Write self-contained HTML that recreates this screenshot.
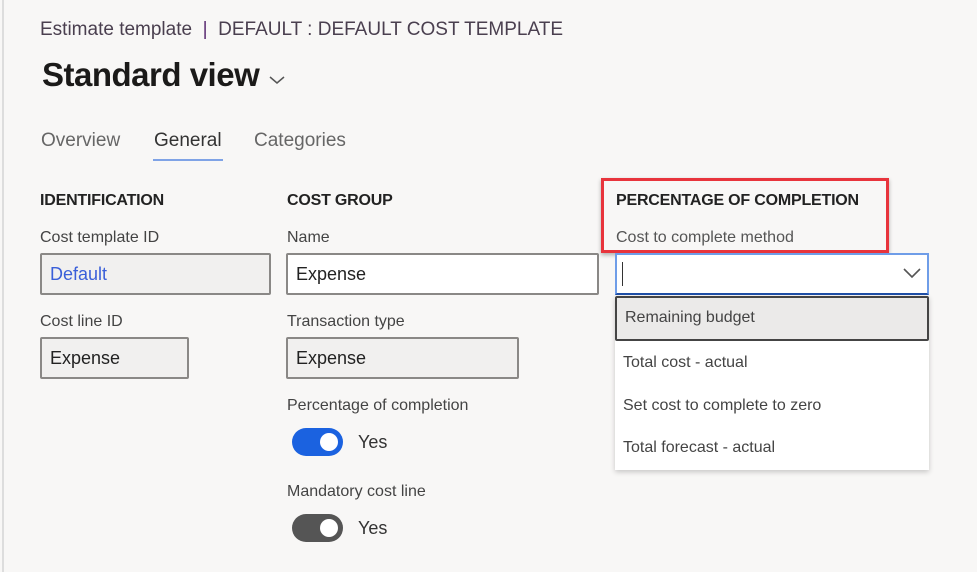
<!DOCTYPE html><html><head><style>
body{margin:0;width:977px;height:572px;background:#f8f7f6;font-family:"Liberation Sans",sans-serif;position:relative;overflow:hidden;color:#323130}
div,span{position:absolute;white-space:nowrap}
.lb{font-size:16px;color:#444}
.h{font-size:16px;font-weight:bold;color:#222;letter-spacing:-.2px}
.in{border:2px solid #8a8886;border-radius:2px;box-sizing:border-box;font-size:18px;padding-left:8px;line-height:38px;color:#222}
.dd{font-size:16px;color:#444;left:623px}
</style></head><body>
<div style="left:2px;top:0;width:2px;height:572px;background:#ddd"></div>
<div style="left:40px;top:19px;font-size:19px;color:#4a3f4f">Estimate template &nbsp;<span style="position:static;color:#5c2d73">|</span>&nbsp; DEFAULT : DEFAULT COST TEMPLATE</div>
<div style="left:42px;top:56px;font-size:33px;font-weight:bold;color:#1b1a19;letter-spacing:-.5px">Standard view</div>
<svg style="position:absolute;left:268px;top:74px" width="18" height="12"><path d="M2 3 L9 9 L16 3" fill="none" stroke="#555" stroke-width="1.5"/></svg>
<div style="left:41px;top:130px;font-size:19px;color:#666">Overview</div>
<div style="left:154px;top:130px;font-size:19px;color:#333">General</div>
<div style="left:153px;top:159px;width:70px;height:2px;background:#7fa3e6"></div>
<div style="left:254px;top:130px;font-size:19px;color:#666">Categories</div>
<div class="h" style="left:40px;top:192px">IDENTIFICATION</div>
<div class="h" style="left:287px;top:192px">COST GROUP</div>
<div class="lb" style="left:40px;top:229px">Cost template ID</div>
<div class="lb" style="left:287px;top:229px">Name</div>
<div class="in" style="left:40px;top:253px;width:231px;height:42px;background:#f1f0ef;color:#3a5fd9">Default</div>
<div class="in" style="left:286px;top:253px;width:313px;height:42px;background:#fff">Expense</div>
<div style="left:601px;top:178px;width:288px;height:75px;border:3px solid #e8343c;box-sizing:border-box;box-shadow:0 2px 4px rgba(0,0,0,.3)"></div>
<div class="h" style="left:616px;top:192px">PERCENTAGE OF COMPLETION</div>
<div class="lb" style="left:616px;top:229px;color:#555">Cost to complete method</div>
<div style="left:615px;top:253px;width:314px;height:42px;box-sizing:border-box;border:2px solid #6f9de8;border-bottom-color:#1f4fa8;background:#fff"></div>
<div style="left:622px;top:262px;width:1px;height:24px;background:#333"></div>
<svg style="position:absolute;left:902px;top:266px" width="20" height="14"><path d="M2 3 L10 11 L18 3" fill="none" stroke="#555" stroke-width="1.6"/></svg>
<div style="left:615px;top:296px;width:314px;height:174px;background:#fff;box-shadow:0 2px 5px rgba(0,0,0,.2)"></div>
<div style="left:615px;top:296px;width:314px;height:45px;box-sizing:border-box;border:2px solid #444;border-radius:2px;background:#ebeae9"></div>
<div class="dd" style="left:625px;top:309px">Remaining budget</div>
<div class="dd" style="top:354px">Total cost - actual</div>
<div class="dd" style="top:397px">Set cost to complete to zero</div>
<div class="dd" style="top:439px">Total forecast - actual</div>
<div class="lb" style="left:40px;top:313px">Cost line ID</div>
<div class="lb" style="left:287px;top:313px">Transaction type</div>
<div class="in" style="left:40px;top:337px;width:149px;height:42px;background:#f1f0ef">Expense</div>
<div class="in" style="left:286px;top:337px;width:233px;height:42px;background:#f1f0ef">Expense</div>
<div class="lb" style="left:287px;top:397px">Percentage of completion</div>
<div style="left:292px;top:428px;width:51px;height:28px;border-radius:14px;background:#1b62e0"></div>
<div style="left:320px;top:433px;width:18px;height:18px;border-radius:50%;background:#fff"></div>
<div style="left:358px;top:432px;font-size:18px;color:#333">Yes</div>
<div class="lb" style="left:287px;top:483px">Mandatory cost line</div>
<div style="left:292px;top:514px;width:51px;height:28px;border-radius:14px;background:#555"></div>
<div style="left:320px;top:519px;width:18px;height:18px;border-radius:50%;background:#fff"></div>
<div style="left:358px;top:518px;font-size:18px;color:#333">Yes</div>
</body></html>
